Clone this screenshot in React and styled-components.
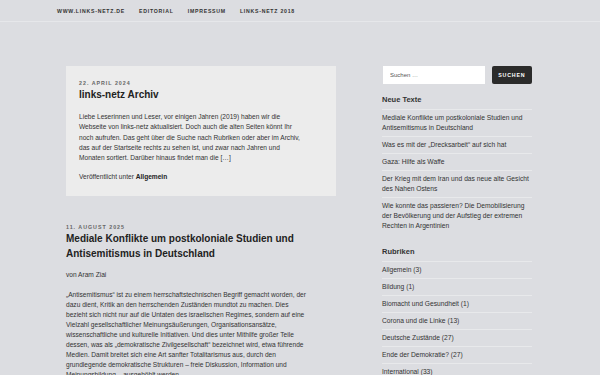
import React from "react";
import styled, { createGlobalStyle } from "styled-components";

const GlobalStyle = createGlobalStyle`
  body {
    margin: 0;
    background: #dcdde1;
    font-family: "Liberation Sans", Arial, sans-serif;
    color: #333;
  }
`;

const NavBar = styled.nav`
  height: 21px;
  border-bottom: 1px solid #e6e7ea;
  display: flex;
  align-items: center;
  gap: 14px;
  padding-left: 57px;
`;

const NavLink = styled.a`
  font-size: 5.2px;
  font-weight: 700;
  letter-spacing: 0.75px;
  text-transform: uppercase;
  color: #333;
  text-decoration: none;
`;

const Layout = styled.div`
  display: grid;
  grid-template-columns: 270px 150px;
  column-gap: 46px;
  padding: 44px 0 0 66px;
`;

const Main = styled.main`
  display: flex;
  flex-direction: column;
`;

const Card = styled.article`
  background: #ececec;
  padding: 13px 13px 14px;
`;

const Post = styled.article`
  margin-top: 27px;
`;

const PostDate = styled.div`
  font-size: 5.3px;
  font-weight: 700;
  letter-spacing: 1px;
  text-transform: uppercase;
  color: #666;
  line-height: 8px;
`;

const Title = styled.h2`
  margin: ${(p) => (p.$big ? "0" : "2px 0 0")};
  font-size: 10px;
  line-height: ${(p) => (p.$big ? "15px" : "12px")};
  font-weight: 700;
  color: #222;
`;

const Text = styled.p`
  margin: ${(p) => p.$m || "0"};
  font-size: 6.6px;
  line-height: ${(p) => p.$lh || "10px"};
  color: #333;
`;

const Strong = styled.strong`
  color: #222;
  font-weight: 700;
`;

const Sidebar = styled.aside`
  display: flex;
  flex-direction: column;
`;

const SearchRow = styled.form`
  display: flex;
  gap: 7px;
  margin: 0 0 0 1px;
`;

const SearchInput = styled.input`
  width: 103px;
  height: 18px;
  box-sizing: border-box;
  border: none;
  background: #fff;
  padding: 0 7px;
  font-family: inherit;
  font-size: 6px;
  color: #333;
  &::placeholder {
    color: #555;
  }
`;

const SearchButton = styled.button`
  width: 41px;
  height: 18px;
  border: none;
  border-radius: 2px;
  background: #2b2b2b;
  color: #fff;
  font-family: inherit;
  font-size: 5.3px;
  font-weight: 700;
  letter-spacing: 0.8px;
  padding: 0;
`;

const WidgetTitle = styled.h3`
  margin: ${(p) => p.$m};
  font-size: 7.5px;
  line-height: 10px;
  font-weight: 700;
  color: #333;
  padding-bottom: 4px;
  border-bottom: 1px solid rgba(255, 255, 255, 0.35);
`;

const List = styled.ul`
  list-style: none;
  margin: 0;
  padding: 0;
`;

const Item = styled.li`
  padding: 3px 0;
  font-size: 6.7px;
  line-height: 10px;
  color: #333;
  border-bottom: 1px solid rgba(255, 255, 255, 0.35);
  &:last-child {
    border-bottom: none;
  }
`;

const lines = (arr) =>
  arr.map((l, i) => (
    <React.Fragment key={i}>
      {l}
      {i < arr.length - 1 && <br />}
    </React.Fragment>
  ));

const recent = [
  ["Mediale Konflikte um postkoloniale Studien und", "Antisemitismus in Deutschland"],
  ["Was es mit der „Drecksarbeit“ auf sich hat"],
  ["Gaza: Hilfe als Waffe"],
  ["Der Krieg mit dem Iran und das neue alte Gesicht", "des Nahen Ostens"],
  [
    "Wie konnte das passieren? Die Demobilisierung",
    "der Bevölkerung und der Aufstieg der extremen",
    "Rechten in Argentinien",
  ],
];

const categories = [
  "Allgemein (3)",
  "Bildung (1)",
  "Biomacht und Gesundheit (1)",
  "Corona und die Linke (13)",
  "Deutsche Zustände (27)",
  "Ende der Demokratie? (27)",
  "International (33)",
];

export default function App() {
  return (
    <>
      <GlobalStyle />
      <NavBar>
        <NavLink>www.links-netz.de</NavLink>
        <NavLink>Editorial</NavLink>
        <NavLink>Impressum</NavLink>
        <NavLink>links-netz 2018</NavLink>
      </NavBar>
      <Layout>
        <Main>
          <Card>
            <PostDate>22. April 2024</PostDate>
            <Title>links-netz Archiv</Title>
            <Text $m="11px 0 0" $lh="10.3px">
              {lines([
                "Liebe Leserinnen und Leser, vor einigen Jahren (2019) haben wir die",
                "Webseite von links-netz aktualisiert. Doch auch die alten Seiten könnt Ihr",
                "noch aufrufen. Das geht über die Suche nach Rubriken oder aber im Archiv,",
                "das auf der Startseite rechts zu sehen ist, und zwar nach Jahren und",
                "Monaten sortiert. Darüber hinaus findet man die […]",
              ])}
            </Text>
            <Text $m="8.5px 0 0">
              Veröffentlicht unter <Strong>Allgemein</Strong>
            </Text>
          </Card>
          <Post>
            <PostDate>11. August 2025</PostDate>
            <Title $big>
              Mediale Konflikte um postkoloniale Studien und
              <br />
              Antisemitismus in Deutschland
            </Title>
            <Text $m="9.5px 0 0">von Aram Ziai</Text>
            <Text $m="10px 0 0">
              {lines([
                "„Antisemitismus“ ist zu einem herrschaftstechnischen Begriff gemacht worden, der",
                "dazu dient, Kritik an den herrschenden Zuständen mundtot zu machen. Dies",
                "bezieht sich nicht nur auf die Untaten des israelischen Regimes, sondern auf eine",
                "Vielzahl gesellschaftlicher Meinungsäußerungen, Organisationsansätze,",
                "wissenschaftliche und kulturelle Initiativen. Und dies unter Mithilfe großer Teile",
                "dessen, was als „demokratische Zivilgesellschaft“ bezeichnet wird, etwa führende",
                "Medien. Damit breitet sich eine Art sanfter Totalitarismus aus, durch   den",
                "grundlegende demokratische Strukturen – freie Diskussion, Information und",
                "Meinungsbildung – ausgehöhlt werden.",
              ])}
            </Text>
          </Post>
        </Main>
        <Sidebar>
          <SearchRow onSubmit={(e) => e.preventDefault()}>
            <SearchInput placeholder="Suchen …" />
            <SearchButton type="submit">SUCHEN</SearchButton>
          </SearchRow>
          <WidgetTitle $m="11px 0 0">Neue Texte</WidgetTitle>
          <List>
            {recent.map((r, i) => (
              <Item key={i}>{lines(r)}</Item>
            ))}
          </List>
          <WidgetTitle $m="13px 0 0">Rubriken</WidgetTitle>
          <List>
            {categories.map((c) => (
              <Item key={c}>{c}</Item>
            ))}
          </List>
        </Sidebar>
      </Layout>
    </>
  );
}
